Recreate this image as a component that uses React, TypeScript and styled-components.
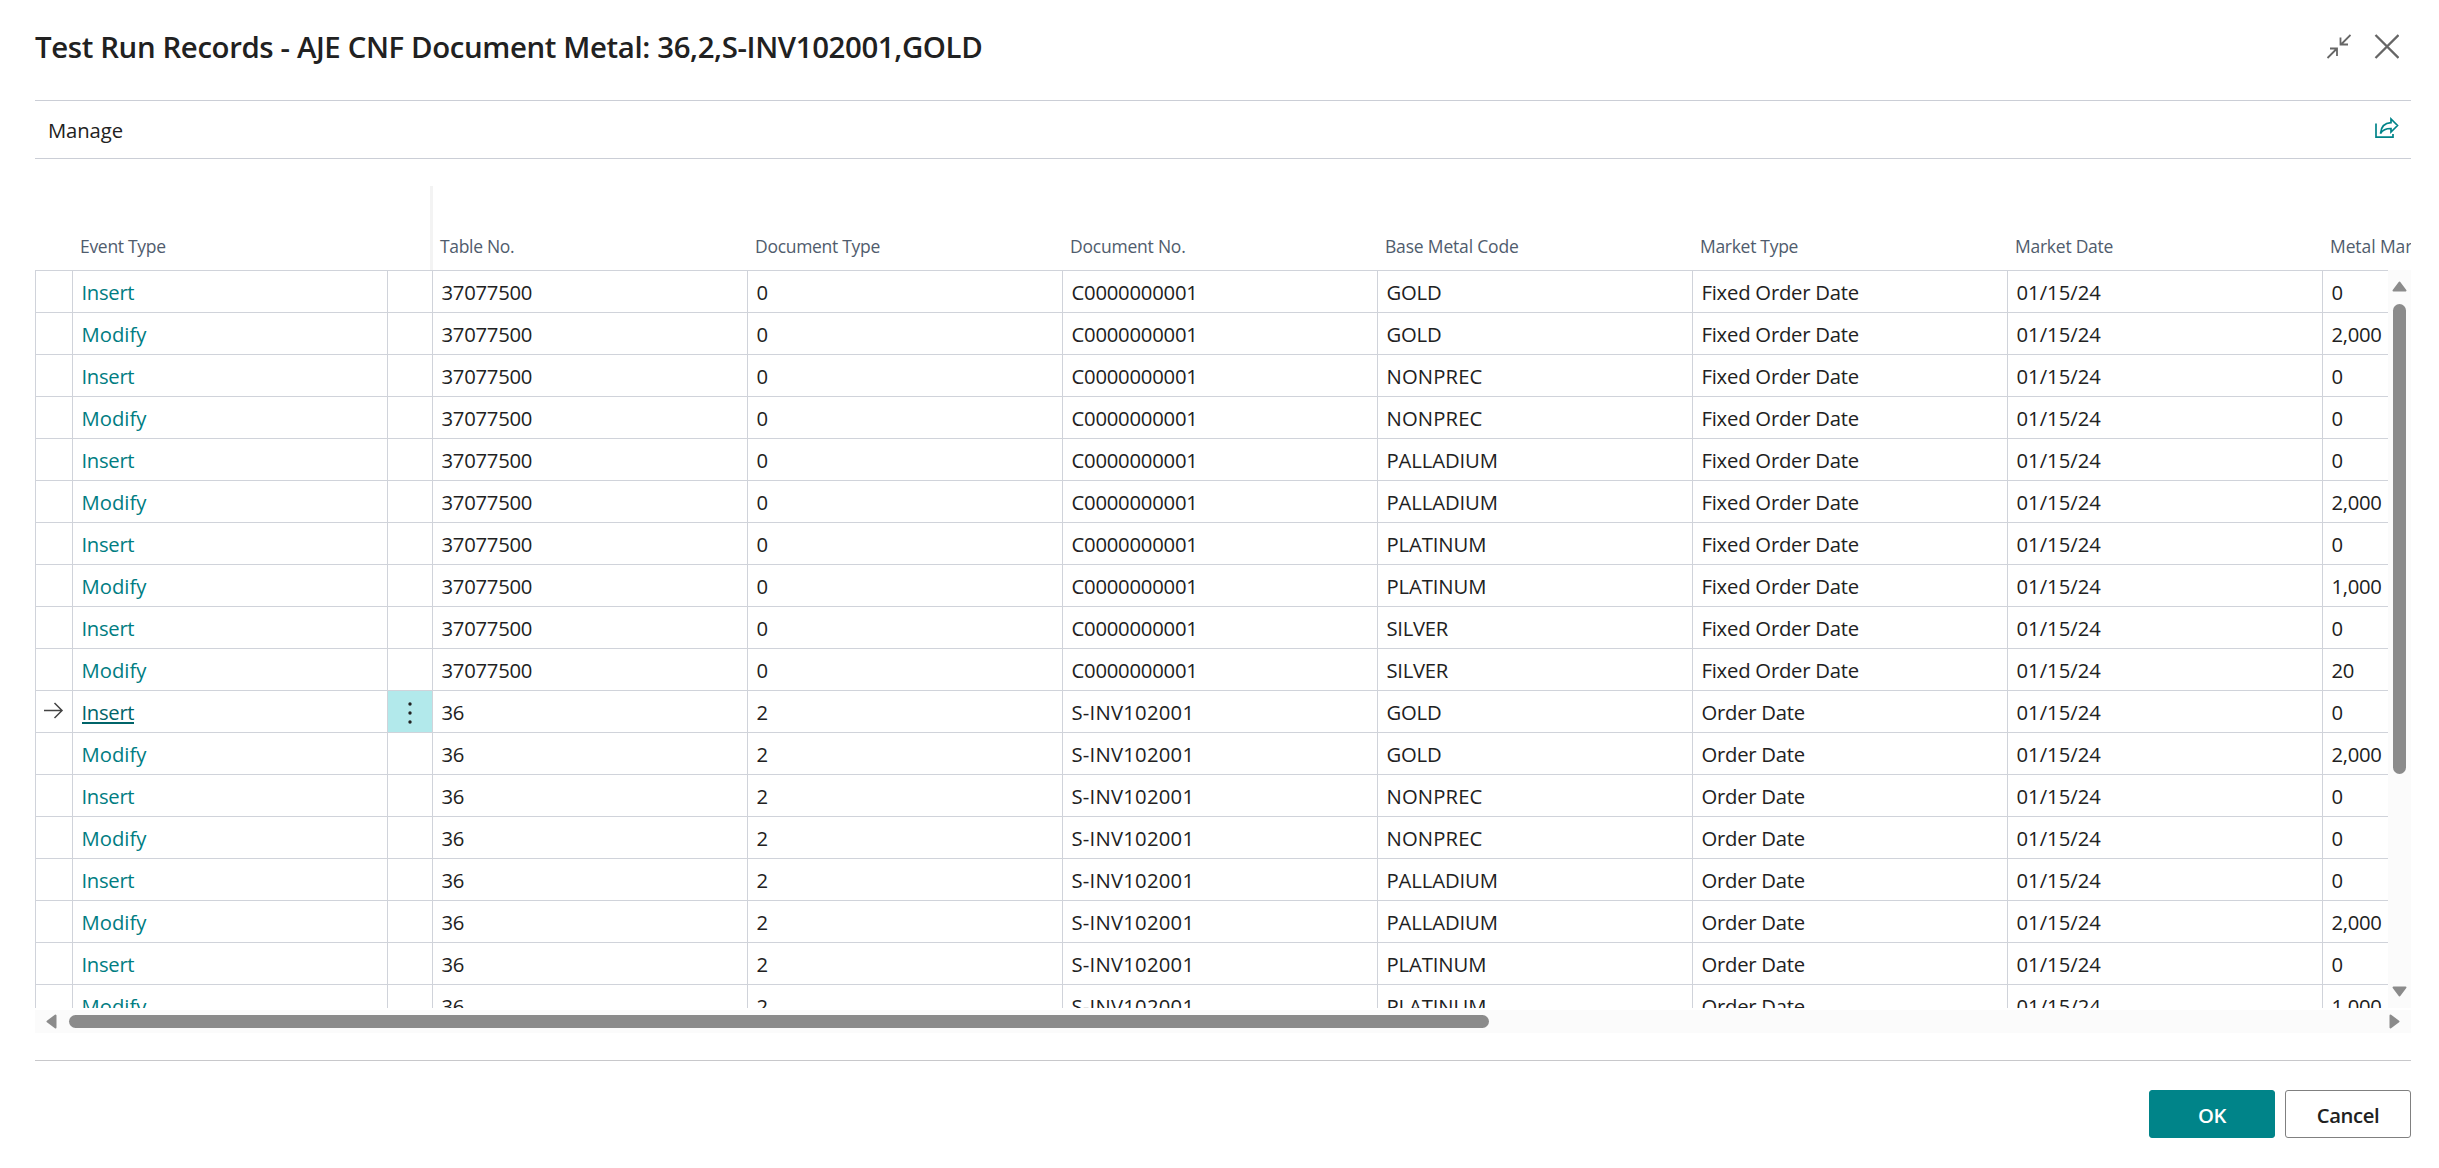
import React from "react";
import styled, { createGlobalStyle } from "styled-components";

const GlobalStyle = createGlobalStyle`
  * { box-sizing: border-box; }
  body {
    margin: 0;
    background: #fff;
    color: #212121;
    font-family: "Open Sans", "Noto Sans", sans-serif;
    overflow: hidden;
  }
`;

const COLUMNS = "37px 315px 45px repeat(7, 315px)";
const LINE = "#d0d3da";

const Dialog = styled.main`
  display: flex;
  flex-direction: column;
  width: 2439px;
  height: 1168px;
  padding: 0 28px 0 35px;
`;

const TitleBar = styled.header`
  display: flex;
  align-items: center;
  height: 100px;
  padding: 0 12px 8px 0;
`;

const Title = styled.h1`
  flex: 1;
  margin: 0;
  padding-top: 2px;
  font-size: 29.4px;
  font-weight: 600;
  line-height: 40px;
  letter-spacing: -0.38px;
  white-space: nowrap;
`;

const IconButton = styled.button<{ $gap?: number; $lift?: number }>`
  display: flex;
  padding: 0;
  margin: 0 0 ${(p) => p.$lift ?? 0}px ${(p) => p.$gap ?? 0}px;
  border: 0;
  background: none;
  color: ${(p) => p.color ?? "#666"};
`;

const ActionBar = styled.nav`
  display: flex;
  align-items: center;
  justify-content: space-between;
  height: 59px;
  padding: 0 12px 0 13px;
  border-top: 1px solid #cbced6;
  border-bottom: 1px solid #cbced6;
`;

const ActionLabel = styled.span`
  font-size: 20.25px;
  line-height: 28px;
  letter-spacing: -0.1px;
`;

const Grid = styled.section`
  display: flex;
  flex-direction: column;
  height: 849px;
  margin-top: 27px;
  overflow: hidden;
`;

const HeaderRow = styled.div`
  display: grid;
  grid-template-columns: ${COLUMNS};
  grid-template-rows: 84px;
  flex: none;
  height: 84px;
  overflow: hidden;
`;

const HeaderCell = styled.div<{ $frozenEdge?: boolean; $spacing?: number }>`
  display: flex;
  align-items: flex-end;
  margin-right: ${(p) => (p.$frozenEdge ? -1 : 0)}px;
  padding: 0 0 11px 8px;
  border-right: ${(p) => (p.$frozenEdge ? "3px solid #f3f3f3" : "0")};
  color: #505c6d;
  font-size: 17.5px;
  line-height: 26px;
  letter-spacing: ${(p) => p.$spacing ?? -0.3}px;
  white-space: nowrap;
`;

const Viewport = styled.div`
  display: flex;
  height: 738px;
`;

const Rows = styled.div`
  width: 2353px;
  border-top: 1px solid ${LINE};
  overflow: hidden;
`;

const Row = styled.div`
  display: grid;
  grid-template-columns: ${COLUMNS};
  grid-template-rows: 42px;
  height: 42px;
`;

const Cell = styled.div<{ $spacing?: number; $center?: boolean; $highlight?: boolean }>`
  display: flex;
  align-items: center;
  justify-content: ${(p) => (p.$center ? "center" : "flex-start")};
  padding-left: ${(p) => (p.$center ? 0 : 8.5)}px;
  border-left: 1px solid ${LINE};
  border-bottom: 1px solid ${LINE};
  background: ${(p) => (p.$highlight ? "#b2e9eb" : "transparent")};
  font-size: 20.25px;
  line-height: 28px;
  letter-spacing: ${(p) => p.$spacing ?? -0.3}px;
  white-space: nowrap;
`;

const EventLink = styled.a<{ $active: boolean }>`
  color: ${(p) => (p.$active ? "#006469" : "#007d82")};
  box-shadow: ${(p) => (p.$active ? "0 -2px 0 #fff inset, 0 -4px 0 #006469 inset" : "none")};
`;

const VerticalScroll = styled.div`
  display: flex;
  flex-direction: column;
  align-items: center;
  width: 23px;
  height: 738px;
  padding: 11px 0;
  background: #fbfbfb;
`;

const VerticalThumb = styled.div`
  width: 13px;
  height: 470px;
  margin: 12px 0 auto;
  border-radius: 7px;
  background: #8b8b8b;
`;

const HorizontalScroll = styled.div`
  display: flex;
  align-items: center;
  height: 23px;
  margin-top: 2px;
  padding: 0 11px;
  background: #fbfbfb;
`;

const HorizontalThumb = styled.div`
  width: 1420px;
  height: 13px;
  margin: 0 auto 0 12px;
  border-radius: 7px;
  background: #8b8b8b;
`;

const Footer = styled.footer`
  display: flex;
  justify-content: flex-end;
  gap: 10px;
  margin-top: 25px;
  padding-top: 29px;
  border-top: 1px solid #c8c8cb;
`;

const Button = styled.button<{ $primary?: boolean }>`
  width: 126px;
  height: 48px;
  padding: 1px 0 0;
  border: 1px solid ${(p) => (p.$primary ? "#008489" : "#808080")};
  border-radius: 3px;
  background: ${(p) => (p.$primary ? "#008489" : "#fff")};
  color: ${(p) => (p.$primary ? "#fff" : "#212121")};
  font: 600 20.25px/28px "Open Sans", "Noto Sans", sans-serif;
  letter-spacing: -0.4px;
`;

const headers: [string, number][] = [
  ["Table No.", -0.33],
  ["Document Type", -0.3],
  ["Document No.", -0.22],
  ["Base Metal Code", -0.18],
  ["Market Type", -0.3],
  ["Market Date", -0.25],
  ["Metal Market", -0.1],
];

const metals: [string, string][] = [
  ["GOLD", "2,000"],
  ["NONPREC", "0"],
  ["PALLADIUM", "2,000"],
  ["PLATINUM", "1,000"],
  ["SILVER", "20"],
];

type GridRecord = { event: string; active: boolean; values: string[] };

const buildRecords = (table: string, type: string, doc: string, market: string): GridRecord[] =>
  metals.flatMap(([metal, amount]) =>
    ["Insert", "Modify"].map((event) => ({
      event,
      active: table === "36" && metal === "GOLD" && event === "Insert",
      values: [table, type, doc, metal, market, "01/15/24", event === "Insert" ? "0" : amount],
    })),
  );

const records = [
  ...buildRecords("37077500", "0", "C0000000001", "Fixed Order Date"),
  ...buildRecords("36", "2", "S-INV102001", "Order Date"),
].slice(0, 18);

const tracking: { [value: string]: number } = {
  "S-INV102001": 0.24,
  "C0000000001": -0.22,
  "37077500": -0.25,
  "01/15/24": 0,
  NONPREC: 0.15,
  PALLADIUM: -0.1,
  PLATINUM: -0.1,
  GOLD: -0.2,
  "Fixed Order Date": -0.22,
  "Order Date": -0.25,
};

const CollapseIcon = () => (
  <svg width="25" height="25" viewBox="0 0 25 25" fill="none" stroke="currentColor" strokeWidth="1.8">
    <path d="M24.500 1 15 10.500M14.500 3.500V10.500H22M1.500 24l9.500-9.500M4 14.500h7V22" />
  </svg>
);

const CloseIcon = () => (
  <svg width="25" height="25" viewBox="0 0 25 25" fill="none" stroke="currentColor" strokeWidth="2.3">
    <path d="M1.500 1l23 23M24.500 1l-23 23" />
  </svg>
);

const ShareIcon = () => (
  <svg width="24" height="22" viewBox="0 0 24 22" fill="none" stroke="currentColor" strokeWidth="1.7">
    <path d="M1 6.500V20.200H18V17M5.500 16.500C6 10 9.500 6 16 5.700V2L22.500 8.500 16 15V11.500C11 11.400 8 12.500 5.500 16.500Z" />
  </svg>
);

const RowArrow = () => (
  <svg width="20" height="19" viewBox="0 0 20 19" fill="none" stroke="#444" strokeWidth="1.5">
    <path d="M0 8.500h17.500M10.500 1l7.500 7.500L10.500 16" />
  </svg>
);

const MoreDots = () => (
  <svg width="5" height="25" viewBox="0 0 5 25" fill="#212121">
    <circle cx="2" cy="5" r="1.700" />
    <circle cx="2" cy="14" r="1.700" />
    <circle cx="2" cy="23" r="1.700" />
  </svg>
);

const rotations = { up: 0, right: 90, down: 180, left: 270 };

const ScrollArrow = ({ to }: { to: keyof typeof rotations }) => {
  const sideways = to === "left" || to === "right";
  return (
    <svg
      width={sideways ? 11 : 15}
      height={sideways ? 15 : 11}
      viewBox={sideways ? "-5.5 -7.5 11 15" : "-7.5 -5.5 15 11"}
      fill="#8b8b8b"
      stroke="#8b8b8b"
      strokeWidth="2"
      strokeLinejoin="round"
    >
      <path transform={`rotate(${rotations[to]})`} d="M0-4 6 4H-6Z" />
    </svg>
  );
};

export default function App() {
  return (
    <Dialog>
      <GlobalStyle />
      <TitleBar>
        <Title>Test Run Records - AJE CNF Document Metal: 36,2,S-INV102001,GOLD</Title>
        <IconButton aria-label="Collapse"><CollapseIcon /></IconButton>
        <IconButton aria-label="Close" $gap={23}><CloseIcon /></IconButton>
      </TitleBar>
      <ActionBar>
        <ActionLabel>Manage</ActionLabel>
        <IconButton aria-label="Share" color="#008489" $lift={3}><ShareIcon /></IconButton>
      </ActionBar>
      <Grid>
        <HeaderRow>
          <HeaderCell />
          <HeaderCell>Event Type</HeaderCell>
          <HeaderCell $frozenEdge />
          {headers.map(([label, spacing]) => (
            <HeaderCell key={label} $spacing={spacing}>{label}</HeaderCell>
          ))}
        </HeaderRow>
        <Viewport>
          <Rows>
            {records.map((record, i) => (
              <Row key={i}>
                <Cell $center>{record.active && <RowArrow />}</Cell>
                <Cell $spacing={record.event === "Modify" ? 0 : -0.3}>
                  <EventLink $active={record.active}>{record.event}</EventLink>
                </Cell>
                <Cell $center $highlight={record.active}>{record.active && <MoreDots />}</Cell>
                {record.values.map((value, c) => (
                  <Cell key={c} $spacing={tracking[value]}>{value}</Cell>
                ))}
              </Row>
            ))}
          </Rows>
          <VerticalScroll>
            <ScrollArrow to="up" />
            <VerticalThumb />
            <ScrollArrow to="down" />
          </VerticalScroll>
        </Viewport>
        <HorizontalScroll>
          <ScrollArrow to="left" />
          <HorizontalThumb />
          <ScrollArrow to="right" />
        </HorizontalScroll>
      </Grid>
      <Footer>
        <Button $primary>OK</Button>
        <Button>Cancel</Button>
      </Footer>
    </Dialog>
  );
}
